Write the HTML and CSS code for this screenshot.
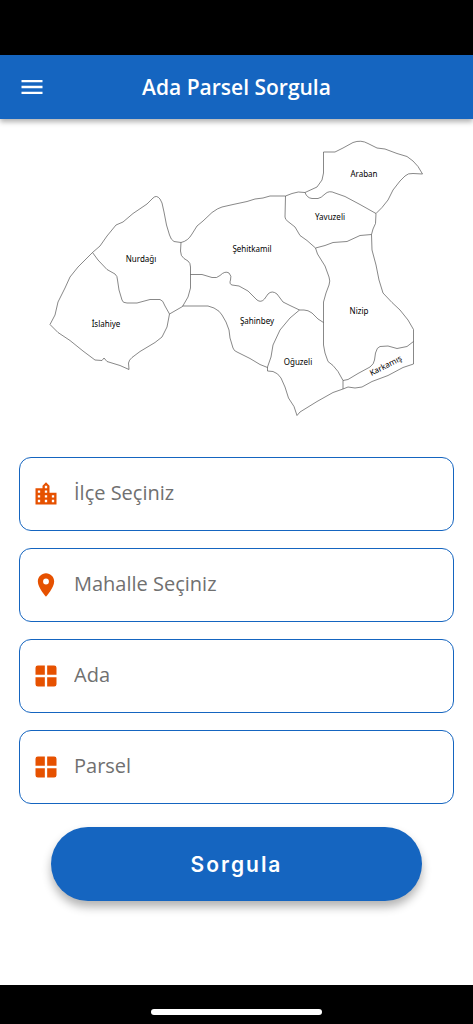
FILE: index.html
```html
<!DOCTYPE html>
<html lang="tr">
<head>
    <meta charset="UTF-8">
    <meta name="viewport" content="width=device-width, initial-scale=1.0">
    <title>Ada Parsel Sorgula</title>
    <link rel="stylesheet" href="styles.css">
</head>
<body>
    <div class="status-bar"></div>

    <header class="app-bar">
        <button type="button" class="menu-button" aria-label="Menü">
            <svg width="28" height="28" viewBox="0 0 24 24" fill="currentColor"><path d="M3 18h18v-2H3v2zm0-5h18v-2H3v2zm0-7v2h18V6H3z"/></svg>
        </button>
        <h1>Ada Parsel Sorgula</h1>
    </header>

    <main>
        <!-- Gaziantep ilçe haritası -->
        <svg class="map" viewBox="19 119 435 338" role="img" aria-label="İlçe haritası">
            <g class="borders">
                <!-- Nurdağı -->
                <path d="M92.5 252.5L100 246L107 236L116 225L123 222L133 213.500L147 204L153 198Q156.500 194.500 160 199L162 203L164 212L166.500 225L169.500 235Q171 240 174 241.500L181 242.500"/>
                <path d="M181 242.500L180.500 251Q180.500 256 184 258.500L188 261Q190.500 263 190.500 267V288L188 297L182.500 306.500L169.500 314"/>
                <path d="M92.500 252.500L98 260L107 269.500L115 274Q117.500 276 117.500 280L119 290L122 300Q122.500 303 127 303H137L150 299.500H160Q163 300 165 306L169.500 314"/>
                <!-- İslahiye -->
                <path d="M169.500 314L167 327L162 337L155 342.500L140 351.500L132 357.500Q129 360 128.500 363L129 369.500L120 365.500L107 361.500L104 358L102 360.500L95 360L83 351L70 340.500L58 332.500L50 324.500L55 315L58 302L65 288L70 277L78 267L92.500 252.500"/>
                <!-- Şehitkamil -->
                <path d="M181 242.500Q188 241 192 234L197 226L203 221L212 212.500Q218 208 222 207L233 204.500L247 201.500L255 199L263 198L270 196L285.500 196L292 193.500Q298 191 305 192.500"/>
                <path d="M190.500 274.500H202L212 277.500Q217 278.500 220 275.500Q225 270.500 229 273Q232 276 230.500 280Q229 284 232 285L239 286L248 291L257 300Q261 303 264.500 299L268 294Q272 290 277 294L283 302L290 305.500L299.500 310"/>
                <!-- Araban -->
                <path d="M305 192.500L317 187L322 180L323.500 173V152H335L343 148L353 142.500Q361 139.500 368 143.500L377 148L385 149L397 153.500L407 156.500L413 161L418 166.500L422.500 174L413 173.500Q408 173 405 176L400 181L393 190L388 200L382 207.500L376 213.500"/>
                <path d="M305 192.500Q307 198 312 198.500H318Q321 198 325 194Q329 190 335 193L345 196.500L360 204.500L376 213.500"/>
                <!-- Yavuzeli -->
                <path d="M285.500 196L285 217Q285 219.500 288 221.500L295 227L300 235.500L307 240.500L315.500 248"/>
                <path d="M376 213.500L375.500 223.500L373 229L371.500 234.500L360 235.500L347 241.500L333 242.500L325 245.500L315.500 248"/>
                <!-- Nizip -->
                <path d="M315.500 248L317.500 254L325 266L329 277Q330.500 281 329 285L326 293L323.500 302V345L325 353L328 361.500L333 365.500L338 371.500L343 380.500V389"/>
                <path d="M371.500 234.500L372 250L376 265L379 280L383 293L392 302.500L400 310L408 320L413.500 329.500V364"/>
                <!-- Karkamış -->
                <path d="M343 380.500L348 379.500L358 373.500L370 367Q374 364 374.500 360L375.500 353Q377 347 380 346.500L388 346L397 348.500L407 346.500L413.500 341.500"/>
                <path d="M413.500 364L403 367.500L388 375.500L372 381.500L362 387L355 388L348 387L343 389L333 392.500L317 401.500L300 412L297 415.500"/>
                <!-- Şahinbey -->
                <path d="M182.500 306H208L214 308Q220 311 222 315L226 322L229 330L230 338L233 348Q234 351 237 352L250 358.500L260 364.500L267.500 367.500"/>
                <!-- Oğuzeli -->
                <path d="M323.500 322.500L318 319L312 313Q308 310 304 310H299.500L290 318L280 330L273 345L271 357L267.500 367V371L273 371.500Q278 373 281 378L285 387L288.500 398L294 406.500L297 415.500"/>
            </g>
            <g class="names">
                <text x="364" y="177">Araban</text>
                <text x="330" y="220">Yavuzeli</text>
                <text x="252" y="252">Şehitkamil</text>
                <text x="141" y="262">Nurdağı</text>
                <text x="106" y="327">İslahiye</text>
                <text x="257" y="324">Şahinbey</text>
                <text x="298" y="365">Oğuzeli</text>
                <text x="359" y="314">Nizip</text>
                <text x="387" y="368" transform="rotate(-27 387 368)">Karkamış</text>
            </g>
        </svg>

        <form class="query-form">
            <div class="field">
                <svg class="icon" viewBox="0 0 24 24"><path d="M15 11V5l-3-3-3 3v2H3v14h18V11h-6zm-8 8H5v-2h2v2zm0-4H5v-2h2v2zm0-4H5V9h2v2zm6 8h-2v-2h2v2zm0-4h-2v-2h2v2zm0-4h-2V9h2v2zm0-4h-2V5h2v2zm6 12h-2v-2h2v2zm0-4h-2v-2h2v2z"/></svg>
                <select aria-label="İlçe">
                    <option>İlçe Seçiniz</option>
                </select>
            </div>
            <div class="field">
                <svg class="icon" viewBox="0 0 24 24"><path d="M12 2C8.130 2 5 5.130 5 9c0 5.250 7 13 7 13s7-7.750 7-13c0-3.870-3.130-7-7-7zm0 9.500a2.500 2.500 0 0 1 0-5 2.500 2.500 0 0 1 0 5z"/></svg>
                <select aria-label="Mahalle">
                    <option>Mahalle Seçiniz</option>
                </select>
            </div>
            <div class="field">
                <svg class="icon" viewBox="0 0 24 24"><path d="M11 3v8H3V5a2 2 0 0 1 2-2zM13 3h6a2 2 0 0 1 2 2v6h-8zM3 13h8v8H5a2 2 0 0 1-2-2zM13 13h8v6a2 2 0 0 1-2 2h-6z"/></svg>
                <input type="text" placeholder="Ada" aria-label="Ada">
            </div>
            <div class="field">
                <svg class="icon" viewBox="0 0 24 24"><path d="M11 3v8H3V5a2 2 0 0 1 2-2zM13 3h6a2 2 0 0 1 2 2v6h-8zM3 13h8v8H5a2 2 0 0 1-2-2zM13 13h8v6a2 2 0 0 1-2 2h-6z"/></svg>
                <input type="text" placeholder="Parsel" aria-label="Parsel">
            </div>
            <button type="button" class="submit">Sorgula</button>
        </form>
    </main>

    <footer class="home-bar">
        <div class="home-indicator"></div>
    </footer>
</body>
</html>
```
FILE: styles.css
```css
* {
    box-sizing: border-box;
}

body {
    font-family: "Open Sans", sans-serif;
    background-color: #fff;
    margin: 0;
    min-height: 100vh;
    display: flex;
    flex-direction: column;
}

.status-bar {
    height: 55px;
    background-color: #000;
}

.app-bar {
    display: grid;
    grid-template-columns: 64px 1fr 64px;
    align-items: center;
    height: 64px;
    background-color: #1565c0;
    color: #fff;
    box-shadow: 0 3px 5px rgba(0, 0, 0, 0.3);
}

.app-bar h1 {
    margin: 0;
    font-size: 21px;
    font-weight: 600;
    text-align: center;
}

.menu-button {
    display: flex;
    justify-content: center;
    padding: 8px;
    border: none;
    background: none;
    color: inherit;
    cursor: pointer;
}

main {
    flex: 1;
    padding: 0 19px 24px;
}

.map {
    display: block;
    width: 100%;
}

.borders {
    fill: none;
    stroke: #555;
    stroke-width: 0.7;
    stroke-linejoin: round;
}

.names {
    font-family: "Noto Sans", sans-serif;
    font-size: 8px;
    fill: #000;
    text-anchor: middle;
}

.query-form {
    display: flex;
    flex-direction: column;
    gap: 17px;
}

.field {
    display: flex;
    align-items: center;
    height: 74px;
    padding-left: 12px;
    border: 1px solid #1565c0;
    border-radius: 12px;
}

.icon {
    width: 28px;
    height: 28px;
    margin-right: 14px;
    flex-shrink: 0;
    fill: #e65100;
}

.field select,
.field input {
    flex: 1;
    min-width: 0;
    height: 100%;
    padding: 0 0 3px;
    border: none;
    outline: none;
    background: none;
    appearance: none;
    font-family: inherit;
    font-size: 20px;
    color: #707070;
}

.field input::placeholder {
    color: #707070;
    opacity: 1;
}

.submit {
    height: 74px;
    margin: 6px 32px 0;
    border: none;
    border-radius: 37px;
    background-color: #1565c0;
    color: #fff;
    font-family: Inter, sans-serif;
    font-size: 21px;
    font-weight: 600;
    letter-spacing: 2px;
    box-shadow: 0 6px 10px rgba(0, 0, 0, 0.3);
    cursor: pointer;
}

.home-bar {
    display: flex;
    justify-content: center;
    align-items: center;
    height: 39px;
    padding-top: 14px;
    background-color: #000;
}

.home-indicator {
    width: 36%;
    height: 6px;
    border-radius: 3px;
    background-color: #fff;
}
```
